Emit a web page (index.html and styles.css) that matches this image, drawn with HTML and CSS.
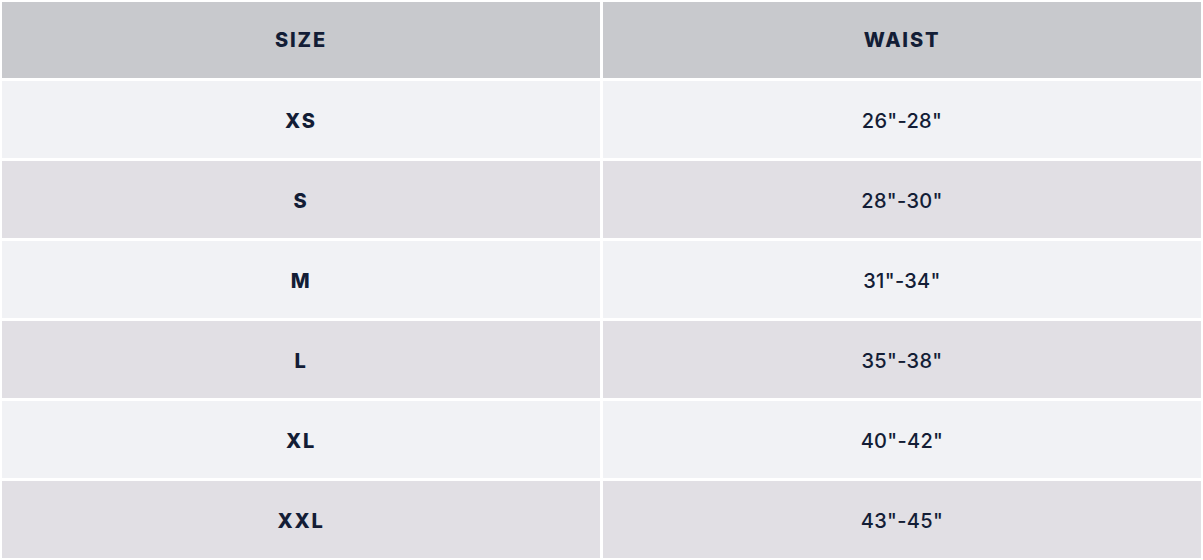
FILE: index.html
```html
<!DOCTYPE html>
<html lang="en">
<head>
<meta charset="utf-8">
<title>Size chart</title>
<link rel="stylesheet" href="styles.css">
</head>
<body>
<div class="chart">
  <div class="row head"><div class="cell">SIZE</div><div class="cell">WAIST</div></div>
  <div class="row odd"><div class="cell b">XS</div><div class="cell">26"-28"</div></div>
  <div class="row even"><div class="cell b">S</div><div class="cell">28"-30"</div></div>
  <div class="row odd"><div class="cell b">M</div><div class="cell">31"-34"</div></div>
  <div class="row even"><div class="cell b">L</div><div class="cell">35"-38"</div></div>
  <div class="row odd"><div class="cell b">XL</div><div class="cell">40"-42"</div></div>
  <div class="row even"><div class="cell b">XXL</div><div class="cell">43"-45"</div></div>
</div>
</body>
</html>
```
FILE: styles.css
```css
html, body { margin: 0; padding: 0; background: #ffffff; }
body { font-family: Inter, "Liberation Sans", sans-serif; color: #131d36; }
.chart {
  display: flex;
  flex-direction: column;
  gap: 3px;
  padding: 2px 2px 0 2px;
  width: 1199px;
}
.row {
  display: grid;
  grid-template-columns: 598px 598px;
  column-gap: 3px;
  height: 77px;
}
.row.head { height: 76px; }
.cell {
  display: flex;
  align-items: center;
  justify-content: center;
  font-size: 20px;
  font-weight: 500;
  letter-spacing: 0.3px;
  padding-top: 3px;
}
.head .cell { font-weight: 800; background: #c8c9cd; padding-top: 0; letter-spacing: 1.8px; }
.cell.b { font-weight: 800; letter-spacing: 1.8px; }
.odd .cell { background: #f1f2f5; }
.even .cell { background: #e1dfe4; }
```
